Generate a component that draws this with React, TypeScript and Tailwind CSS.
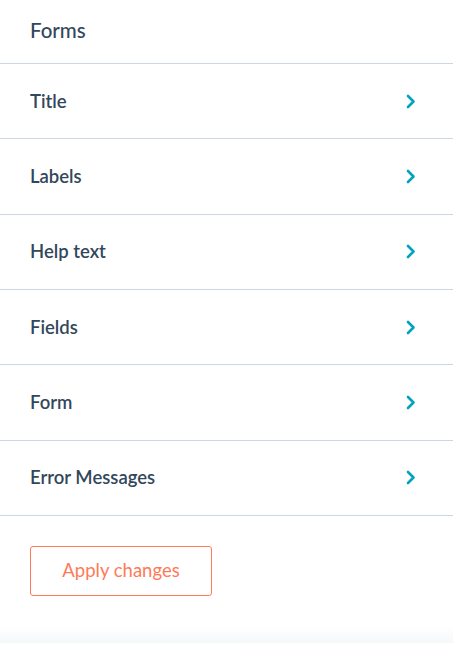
const sections = ["Title", "Labels", "Help text", "Fields", "Form", "Error Messages"];

function Chevron() {
  return (
    <svg width="10" height="15" viewBox="0 0 10 15" fill="none" className="text-[#00a4bd]">
      <path d="M2 2l5.5 5.5L2 13" stroke="currentColor" strokeWidth="2.6" strokeLinecap="round" strokeLinejoin="round" />
    </svg>
  );
}

export default function App() {
  return (
    <div className="w-[453px] h-[652px] bg-white flex flex-col font-['Lato',sans-serif] text-[#33475b]">
      <div className="h-[64px] flex items-center px-[30px] pb-[3px] text-[20.5px] font-medium border-b border-[#cbd6e2]">
        Forms
      </div>
      {sections.map((s) => (
        <div
          key={s}
          className="h-[75.33px] flex items-center justify-between pl-[30px] pr-[37px] border-b border-[#cbd6e2] text-[18.5px] font-semibold"
        >
          <span className="pt-[1px]">{s}</span>
          <Chevron />
        </div>
      ))}
      <div className="px-[30px] pt-[30px]">
        <button className="w-[182px] h-[50px] rounded-[3px] border border-[#ff7a59] text-[#ff7a59] text-[18.5px] bg-white">
          Apply changes
        </button>
      </div>
      <div className="mt-[30px] h-[17px] bg-gradient-to-b from-white to-[#f5f8fa]" />
    </div>
  );
}
